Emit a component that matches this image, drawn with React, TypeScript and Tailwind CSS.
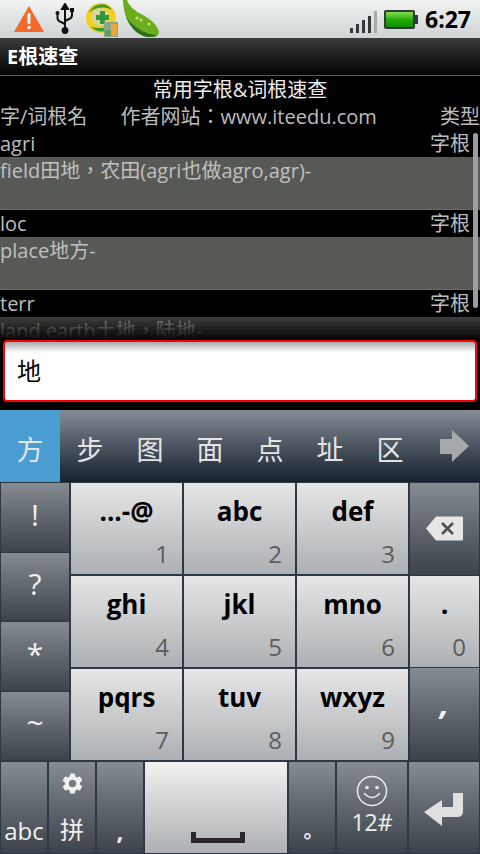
import { MdSettings } from "react-icons/md";

const FONT = "font-['Open_Sans','Noto_Sans_CJK_SC',sans-serif]";
const FONT_TC = "font-['Open_Sans','Noto_Sans_CJK_TC',sans-serif]";

const dark = "bg-gradient-to-b from-[#858c92] to-[#3c434b]";
const light = "bg-gradient-to-b from-[#e6e6e6] to-[#adb0b3]";

function DarkKey({ className = "", children }: { className?: string; children?: React.ReactNode }) {
  return (
    <div className={`${dark} flex items-center justify-center text-[#f0f0f0] ${className}`}>
      {children}
    </div>
  );
}

function NumKey({ label, num }: { label: string; num: string }) {
  return (
    <div className={`${light} relative flex-1 flex flex-col items-center`}>
      <span className="mt-[9px] text-[26px] leading-[38px] font-bold text-black">{label}</span>
      <span className="absolute right-[13px] bottom-[4px] text-[24px] leading-[32px] text-[#5c5c5c]">{num}</span>
    </div>
  );
}

function Row({ name, desc }: { name: string; desc: string }) {
  return (
    <>
      <div className="h-[27px] flex items-center justify-between pr-[10px] text-[20px] text-[#bcbcbc]">
        <span>{name}</span>
        <span>字根</span>
      </div>
      <div className={`${FONT_TC} h-[53px] bg-[#575955] border-b border-dotted border-[#7a7a7a] text-[20px] leading-[28px] text-[#c0c0c0]`}>
        {desc}
      </div>
    </>
  );
}

function Warning() {
  return (
    <svg width="32" height="28" viewBox="0 0 32 28">
      <path d="M16 1 L31 27 H1 Z" fill="#f4692a" />
      <rect x="14.5" y="8" width="3" height="11" rx="1.4" fill="#fff" />
      <circle cx="16" cy="22.5" r="1.8" fill="#fff" />
    </svg>
  );
}

function Usb() {
  return (
    <svg width="20" height="32" viewBox="0 0 20 32" fill="none" stroke="#111" strokeWidth="2">
      <path d="M10 1 L7 6 H13 Z" fill="#111" />
      <path d="M10 5 V26" />
      <path d="M2.5 11 V15 Q2.5 18 6 19 L10 21" />
      <path d="M17 8 V12 Q17 15 14 16 L10 18" />
      <circle cx="2.5" cy="10" r="2" fill="#111" stroke="none" />
      <rect x="15" y="5" width="4" height="4" fill="#111" stroke="none" />
      <circle cx="10" cy="27.5" r="3.4" fill="#111" stroke="none" />
    </svg>
  );
}

function QihooIcon() {
  return (
    <svg width="34" height="36" viewBox="0 0 34 36">
      <circle cx="16" cy="16" r="15" fill="#f2cf1c" />
      <path d="M4 11 A13 13 0 0 1 27 8 A16 12 0 0 0 4 11Z" fill="#3f9a35" />
      <path d="M6 25 A14 14 0 0 0 29 21 A18 11 0 0 1 6 25Z" fill="#3f9a35" />
      <circle cx="15" cy="15" r="9" fill="#d6d59a" />
      <path d="M15 9 H20 V13 H24 V18 H20 V22 H15 V18 H11 V13 H15 Z" fill="#2f9a36" />
      <rect x="19" y="20" width="14" height="15" fill="#8aa58c" />
      <rect x="26" y="22" width="6" height="12" fill="#eea541" />
      <rect x="20" y="28" width="6" height="6" fill="#5e9e58" />
    </svg>
  );
}

function Pea() {
  return (
    <svg width="39" height="38" viewBox="0 0 39 38">
      <path d="M2 0 L6 0 C8 6 14 11 20 14 C28 18 36 24 38 32 C38 36 34 37 28 37 C20 37 10 30 5 17 C3 11 2 5 2 0Z" fill="#6aae20" />
      <path d="M5 17 C10 30 20 37 28 37 C31 37 34 37 36 35 C26 35 13 28 5 17Z" fill="#2f6e22" />
      <circle cx="16" cy="18" r="1.5" fill="#cfe05c" />
      <circle cx="20" cy="20" r="1.5" fill="#cfe05c" />
      <circle cx="28" cy="24" r="1.5" fill="#cfe05c" />
    </svg>
  );
}

function Signal() {
  return (
    <svg width="27" height="22" viewBox="0 0 27 22">
      <rect x="0" y="17" width="3" height="5" fill="#33383b" />
      <rect x="6" y="13" width="3" height="9" fill="#33383b" />
      <rect x="12" y="9" width="3" height="13" fill="#33383b" />
      <rect x="18" y="5" width="3" height="17" fill="#33383b" />
      <rect x="24" y="0" width="3" height="22" fill="#a4a9aa" />
    </svg>
  );
}

function Battery() {
  return (
    <div className="flex items-center">
      <div className="w-[31px] h-[19px] rounded-[2px] border-[2px] border-[#33393c] bg-gradient-to-b from-[#7fe04a] via-[#1fb000] to-[#148a00]" />
      <div className="w-[3px] h-[9px] bg-[#33393c]" />
    </div>
  );
}

function Backspace() {
  return (
    <svg width="37" height="25" viewBox="0 0 37 25">
      <path d="M10 0.5 H36 Q37 0.5 37 1.5 V23.5 Q37 24.5 36 24.5 H10 L0 12.5 Z" fill="#e6e6e6" />
      <path d="M16 7 L27 18 M27 7 L16 18" stroke="#4a5058" strokeWidth="2.5" />
    </svg>
  );
}

function Enter() {
  return (
    <svg width="40" height="34" viewBox="0 0 40 34">
      <path d="M0 19 L18 7 V14 H29 V0 H39 V18 Q39 24 33 24 H18 V33 Z" fill="#dfdfdf" />
    </svg>
  );
}

function Smiley() {
  return (
    <svg width="32" height="32" viewBox="0 0 32 32" fill="none" stroke="#e8e8e8" strokeWidth="1.6">
      <circle cx="16" cy="16" r="14.5" />
      <circle cx="11" cy="12.5" r="1.8" fill="#e8e8e8" stroke="none" />
      <circle cx="21" cy="12.5" r="1.8" fill="#e8e8e8" stroke="none" />
      <path d="M8 18 Q16 27 24 18" />
    </svg>
  );
}

export default function App() {
  const candidates = ["步", "图", "面", "点", "址", "区"];

  return (
    <div className={`${FONT} w-[480px] h-[854px] overflow-hidden bg-black flex flex-col`}>
      {/* status bar */}
      <div className="h-[38px] flex items-center bg-gradient-to-b from-[#f2f4f4] to-[#cfd3d3] overflow-hidden">
        <div className="ml-[13px]"><Warning /></div>
        <div className="ml-[10px]"><Usb /></div>
        <div className="ml-[10px] mt-[1px]"><QihooIcon /></div>
        <div className="ml-[2px]"><Pea /></div>
        <div className="ml-auto mt-[6px]"><Signal /></div>
        <div className="ml-[7px]"><Battery /></div>
        <span className="ml-[7px] mr-[9px] text-[23px] font-bold text-black">6:27</span>
      </div>

      {/* title bar */}
      <div className="h-[38px] border-b border-[#5a5a5a] bg-gradient-to-b from-[#3c3c3c] to-[#050505] flex items-center pl-[7px] text-[20px] font-bold text-white">
        E根速查
      </div>

      {/* list */}
      <div className="relative h-[262px] overflow-hidden">
        <div className="h-[27px] flex items-center justify-center text-[20px] text-[#ececec]">常用字根&amp;词根速查</div>
        <div className={`${FONT_TC} h-[27px] flex items-center justify-between text-[20px] text-[#bcbcbc]`}>
          <span>字/词根名</span>
          <span className="mr-[30px]">作者网站：www.iteedu.com</span>
          <span>类型</span>
        </div>
        <Row name="agri" desc="field田地，农田(agri也做agro,agr)-" />
        <Row name="loc" desc="place地方-" />
        <Row name="terr" desc="land,earth土地，陆地-" />
        <div className="absolute right-[2px] top-[57px] w-[5px] h-[175px] rounded-[3px] bg-[#9a9ea2]" />
        <div className="absolute left-0 right-0 bottom-0 h-[21px] bg-gradient-to-b from-black/30 to-black/90" />
      </div>

      {/* input */}
      <div className="h-[72px] bg-black pt-[2px] px-[3px]">
        <div className="h-[62px] rounded-[4px] border-[2px] border-[#ff0000] bg-gradient-to-b from-[#a8a8a8] to-white to-[18%] flex items-center pl-[12px] text-[24px] text-black">
          地
        </div>
      </div>

      {/* candidates */}
      <div className="h-[72px] flex bg-gradient-to-b from-[#868d95] to-[#18222e] text-[27px] text-[#e4e4e4]">
        <div className="w-[60px] pt-[8px] bg-[#4a9ed2] flex items-center justify-center">方</div>
        {candidates.map((c) => (
          <div key={c} className="w-[60px] pt-[8px] flex items-center justify-center">{c}</div>
        ))}
        <div className="flex-1 flex items-center justify-center pl-[9px]">
          <svg width="29" height="32" viewBox="0 0 29 32">
            <path d="M0 9 H12 V0 L29 16 L12 32 V24 H0 Z" fill="#a6a8aa" />
          </svg>
        </div>
      </div>

      {/* keyboard */}
      <div className="flex-1 flex flex-col gap-[2px] bg-[#2c3844] pt-[1px] pb-[1px]">
        <div className="h-[277px] flex gap-[2px] px-[1px]">
          <div className="w-[68px] flex flex-col gap-[1px] text-[30px]">
            <DarkKey className="flex-1 pb-[6px]">!</DarkKey>
            <DarkKey className="flex-1 pb-[6px]">?</DarkKey>
            <DarkKey className="flex-1 pb-[6px]">*</DarkKey>
            <DarkKey className="flex-1 pb-[6px]">~</DarkKey>
          </div>
          <div className="w-[337px] flex flex-col gap-[2px]">
            <div className="flex-1 flex gap-[2px]">
              <NumKey label="...-@" num="1" />
              <NumKey label="abc" num="2" />
              <NumKey label="def" num="3" />
            </div>
            <div className="flex-1 flex gap-[2px]">
              <NumKey label="ghi" num="4" />
              <NumKey label="jkl" num="5" />
              <NumKey label="mno" num="6" />
            </div>
            <div className="flex-1 flex gap-[2px]">
              <NumKey label="pqrs" num="7" />
              <NumKey label="tuv" num="8" />
              <NumKey label="wxyz" num="9" />
            </div>
          </div>
          <div className="flex-1 flex flex-col gap-[1px]">
            <DarkKey className="flex-1"><Backspace /></DarkKey>
            <div className={`${light} relative flex-1 flex justify-center`}>
              <span className="mt-[9px] text-[27px] leading-[38px] font-bold text-black">.</span>
              <span className="absolute right-[13px] bottom-[4px] text-[24px] leading-[32px] text-[#5c5c5c]">0</span>
            </div>
            <DarkKey className="flex-1 text-[32px] font-bold italic">
              <span className="-mt-[22px]">,</span>
            </DarkKey>
          </div>
        </div>
        <div className="flex-1 flex gap-[2px] px-[1px]">
          <DarkKey className="w-[46px] items-end pb-[4px] text-[24px]">abc</DarkKey>
          <DarkKey className="w-[46px] flex-col gap-[19px] pt-[1px] text-[24px]">
            <MdSettings size={25} />
            <span className="leading-[30px]">拼</span>
          </DarkKey>
          <DarkKey className="w-[46px] items-end pb-[4px] text-[24px] font-bold">,</DarkKey>
          <div className="bg-gradient-to-b from-[#f2f2f2] to-[#adb0b3] w-[142px] flex items-end justify-center pb-[10px] pl-[4px]">
            <div className="w-[54px] h-[11px] border-x-[5px] border-b-[5px] border-[#2b2730]" />
          </div>
          <DarkKey className="w-[46px] items-end pb-[7px] pl-[3px] text-[20px] font-bold">。</DarkKey>
          <DarkKey className="w-[70px] flex-col pb-[4px]">
            <Smiley />
            <span className="text-[23px] leading-[30px]">12#</span>
          </DarkKey>
          <DarkKey className="flex-1 pt-[5px]"><Enter /></DarkKey>
        </div>
      </div>
    </div>
  );
}
